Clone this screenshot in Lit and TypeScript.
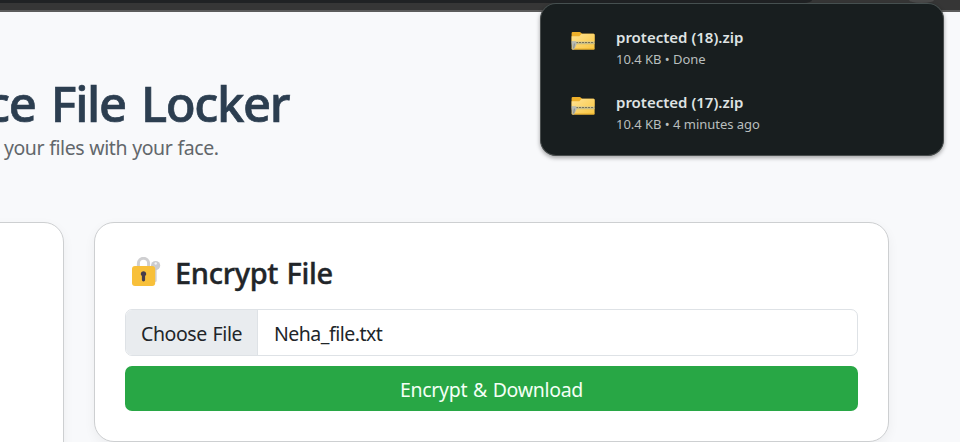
import { LitElement, html, css, svg } from "lit";
import { customElement, property } from "lit/decorators.js";

const folderIcon = svg`
  <svg width="24" height="20" viewBox="0 0 24 20">
    <defs>
      <linearGradient id="f" x1="0" y1="0" x2="1" y2="1">
        <stop offset="0" stop-color="#ffe394" /><stop offset="1" stop-color="#f9c63f" />
      </linearGradient>
    </defs>
    <path d="M.6 2.2Q.6 1 1.8 1H8.6Q9.4 1 10 1.7L11.2 2.8H22.4Q23.5 2.8 23.5 4V10H.6Z" fill="#eeb02a" />
    <path d="M.6 5.2H8.3L10.7 2.8H22.5Q23.6 2.8 23.6 4V17.4Q23.6 18.6 22.5 18.6H1.7Q.6 18.6 .6 17.5Z" fill="url(#f)" />
    <path d="M.6 17.6H23.6Q23.6 18.6 22.5 18.6H1.7Q.6 18.6 .6 17.6Z" fill="#e9ad2a" />
    <path d="M1 10.4H23.4V13H1Z" fill="#d8cc91" />
    <path d="M2 11.5H23.4" stroke="#77725a" stroke-width="1" stroke-dasharray="2.2 .8" />
    <path d="M2 12.8H23.4" stroke="#b9ae78" stroke-width=".7" />
    <path d="M.4 10.3H4.8L5.9 12.3L4.6 15.6L3 18.6H1.4L.9 14Z" fill="#b7b9b1" />
    <path d="M3.4 12.6L2.7 17.4" stroke="#888b84" stroke-width="1" />
  </svg>`;

const lockIcon = svg`
  <svg width="32" height="32" viewBox="0 0 32 32">
    <path d="M25.2 11V23.6" stroke="#d3d3d6" stroke-width="3" stroke-linecap="round" />
    <circle cx="25.6" cy="8.6" r="4.6" fill="#cbcbce" />
    <circle cx="25.7" cy="6.5" r="1.2" fill="#f2f2f4" />
    <path d="M8.4 11V6.4A5.1 5.1 0 0 1 18.6 6.4V11" fill="none" stroke="#cfcfd1" stroke-width="3" />
    <rect x="2" y="9" width="23.2" height="20" rx="3" fill="#f8c03a" />
    <path d="M13.5 14.2A2.7 2.7 0 0 0 11.9 19.1V22.8A1.6 1.6 0 0 0 15.1 22.8V19.1A2.7 2.7 0 0 0 13.5 14.2Z" fill="#463c4b" />
  </svg>`;

@customElement("download-item")
class DownloadItem extends LitElement {
  @property() name = "";
  @property() detail = "";
  static styles = css`
    :host { display: flex; height: 65px; font-family: "Segoe UI", "Noto Sans", sans-serif; }
    svg { display: block; }
    .icon { width: 45px; padding-top: 4px; }
    .name { font-size: 15px; line-height: 20px; font-weight: 600; color: #dfe3e3; white-space: nowrap; }
    .detail { margin-top: 3px; font-size: 13px; line-height: 19px; letter-spacing: -0.03px; color: #b9bebe; white-space: nowrap; }
  `;
  render() {
    return html`<div class="icon">${folderIcon}</div>
      <div>
        <div class="name">${this.name}</div>
        <div class="detail">${this.detail}</div>
      </div>`;
  }
}

@customElement("app-root")
class AppRoot extends LitElement {
  static styles = css`
    * { box-sizing: border-box; }
    svg { display: block; }
    :host {
      display: block; position: relative; width: 960px; height: 442px; overflow: hidden;
      background: #f8f9fb; color: #212529; font-family: "Segoe UI", "Noto Sans", sans-serif;
    }
    .chrome { display: flex; height: 12px; background: #363636; border-bottom: 2px solid #5c5c5c; overflow: hidden; }
    .tab { width: 812px; height: 3px; background: #202224; border-bottom-right-radius: 8px 3px; }
    .knob { margin-left: 97px; width: 25px; height: 3px; background: #4a4a4a; border-radius: 0 0 12px 12px / 0 0 3px 3px; }
    .hero { width: 289px; height: 210px; padding-top: 65px; display: flex; flex-direction: column; }
    h1 { align-self: flex-end; margin: 0; font-size: 49px; line-height: 52px; font-weight: 500; -webkit-text-stroke: 0.7px #2c3e50; letter-spacing: -1.4px; word-spacing: 4px; color: #2c3e50; white-space: nowrap; }
    .sub { margin: 6px 0 0 4px; font-size: 19.5px; line-height: 26px; letter-spacing: -0.45px; word-spacing: 0.6px; color: #62676b; white-space: nowrap; }
    .cards { display: flex; gap: 30px; margin-left: -60px; }
    .card {
      height: 220px; background: #fff; border: 1px solid #cdcfd1; border-radius: 20px;
      box-shadow: 0 4px 12px rgba(0, 0, 0, .05);
    }
    .side { width: 124px; height: 260px; }
    .main { width: 795px; padding: 29px 30px 0; }
    .title { display: flex; align-items: center; height: 42px; margin-bottom: 15px; padding-left: 5px; }
    h2 { margin: 0 0 0 13px; font-size: 29px; line-height: 36px; font-weight: 500; -webkit-text-stroke: 0.4px #212529; letter-spacing: -0.3px; word-spacing: 1px; white-space: nowrap; }
    .file { display: flex; height: 47px; border: 1px solid #dee2e6; border-radius: 7px; overflow: hidden; font-size: 19.5px; line-height: 48px; letter-spacing: -0.4px; white-space: nowrap; }
    .choose { width: 132px; padding-left: 15px; background: #e9ecef; border-right: 1px solid #dee2e6; word-spacing: 1px; }
    .value { padding-left: 16px; letter-spacing: -0.5px; }
    .go {
      display: block; width: 100%; height: 45px; margin-top: 10px; border: 0; border-radius: 7px; padding: 2px 0 0;
      background: #28a745; color: #f4fff6; font: 19.5px "Segoe UI", "Noto Sans", sans-serif; letter-spacing: -0.3px; word-spacing: 1px;
    }
    .popup {
      position: absolute; left: 540px; top: 3px; width: 404px; height: 153px; padding: 23px 30px 0;
      background: #181e1f; border: 1px solid #484d4d; border-top-color: #465050; border-radius: 16px;
      box-shadow: 0 2px 4px rgba(0, 0, 0, .35);
    }
  `;
  render() {
    return html`
      <div class="chrome"><div class="tab"></div><div class="knob"></div></div>
      <header class="hero">
        <h1>ce File Locker</h1>
        <p class="sub">your files with your face.</p>
      </header>
      <main class="cards">
        <section class="card side"></section>
        <section class="card main">
          <div class="title">${lockIcon}<h2>Encrypt File</h2></div>
          <div class="file"><span class="choose">Choose File</span><span class="value">Neha_file.txt</span></div>
          <button class="go">Encrypt &amp; Download</button>
        </section>
      </main>
      <aside class="popup">
        <download-item name="protected (18).zip" detail="10.4 KB • Done"></download-item>
        <download-item name="protected (17).zip" detail="10.4 KB • 4 minutes ago"></download-item>
      </aside>
    `;
  }
}
